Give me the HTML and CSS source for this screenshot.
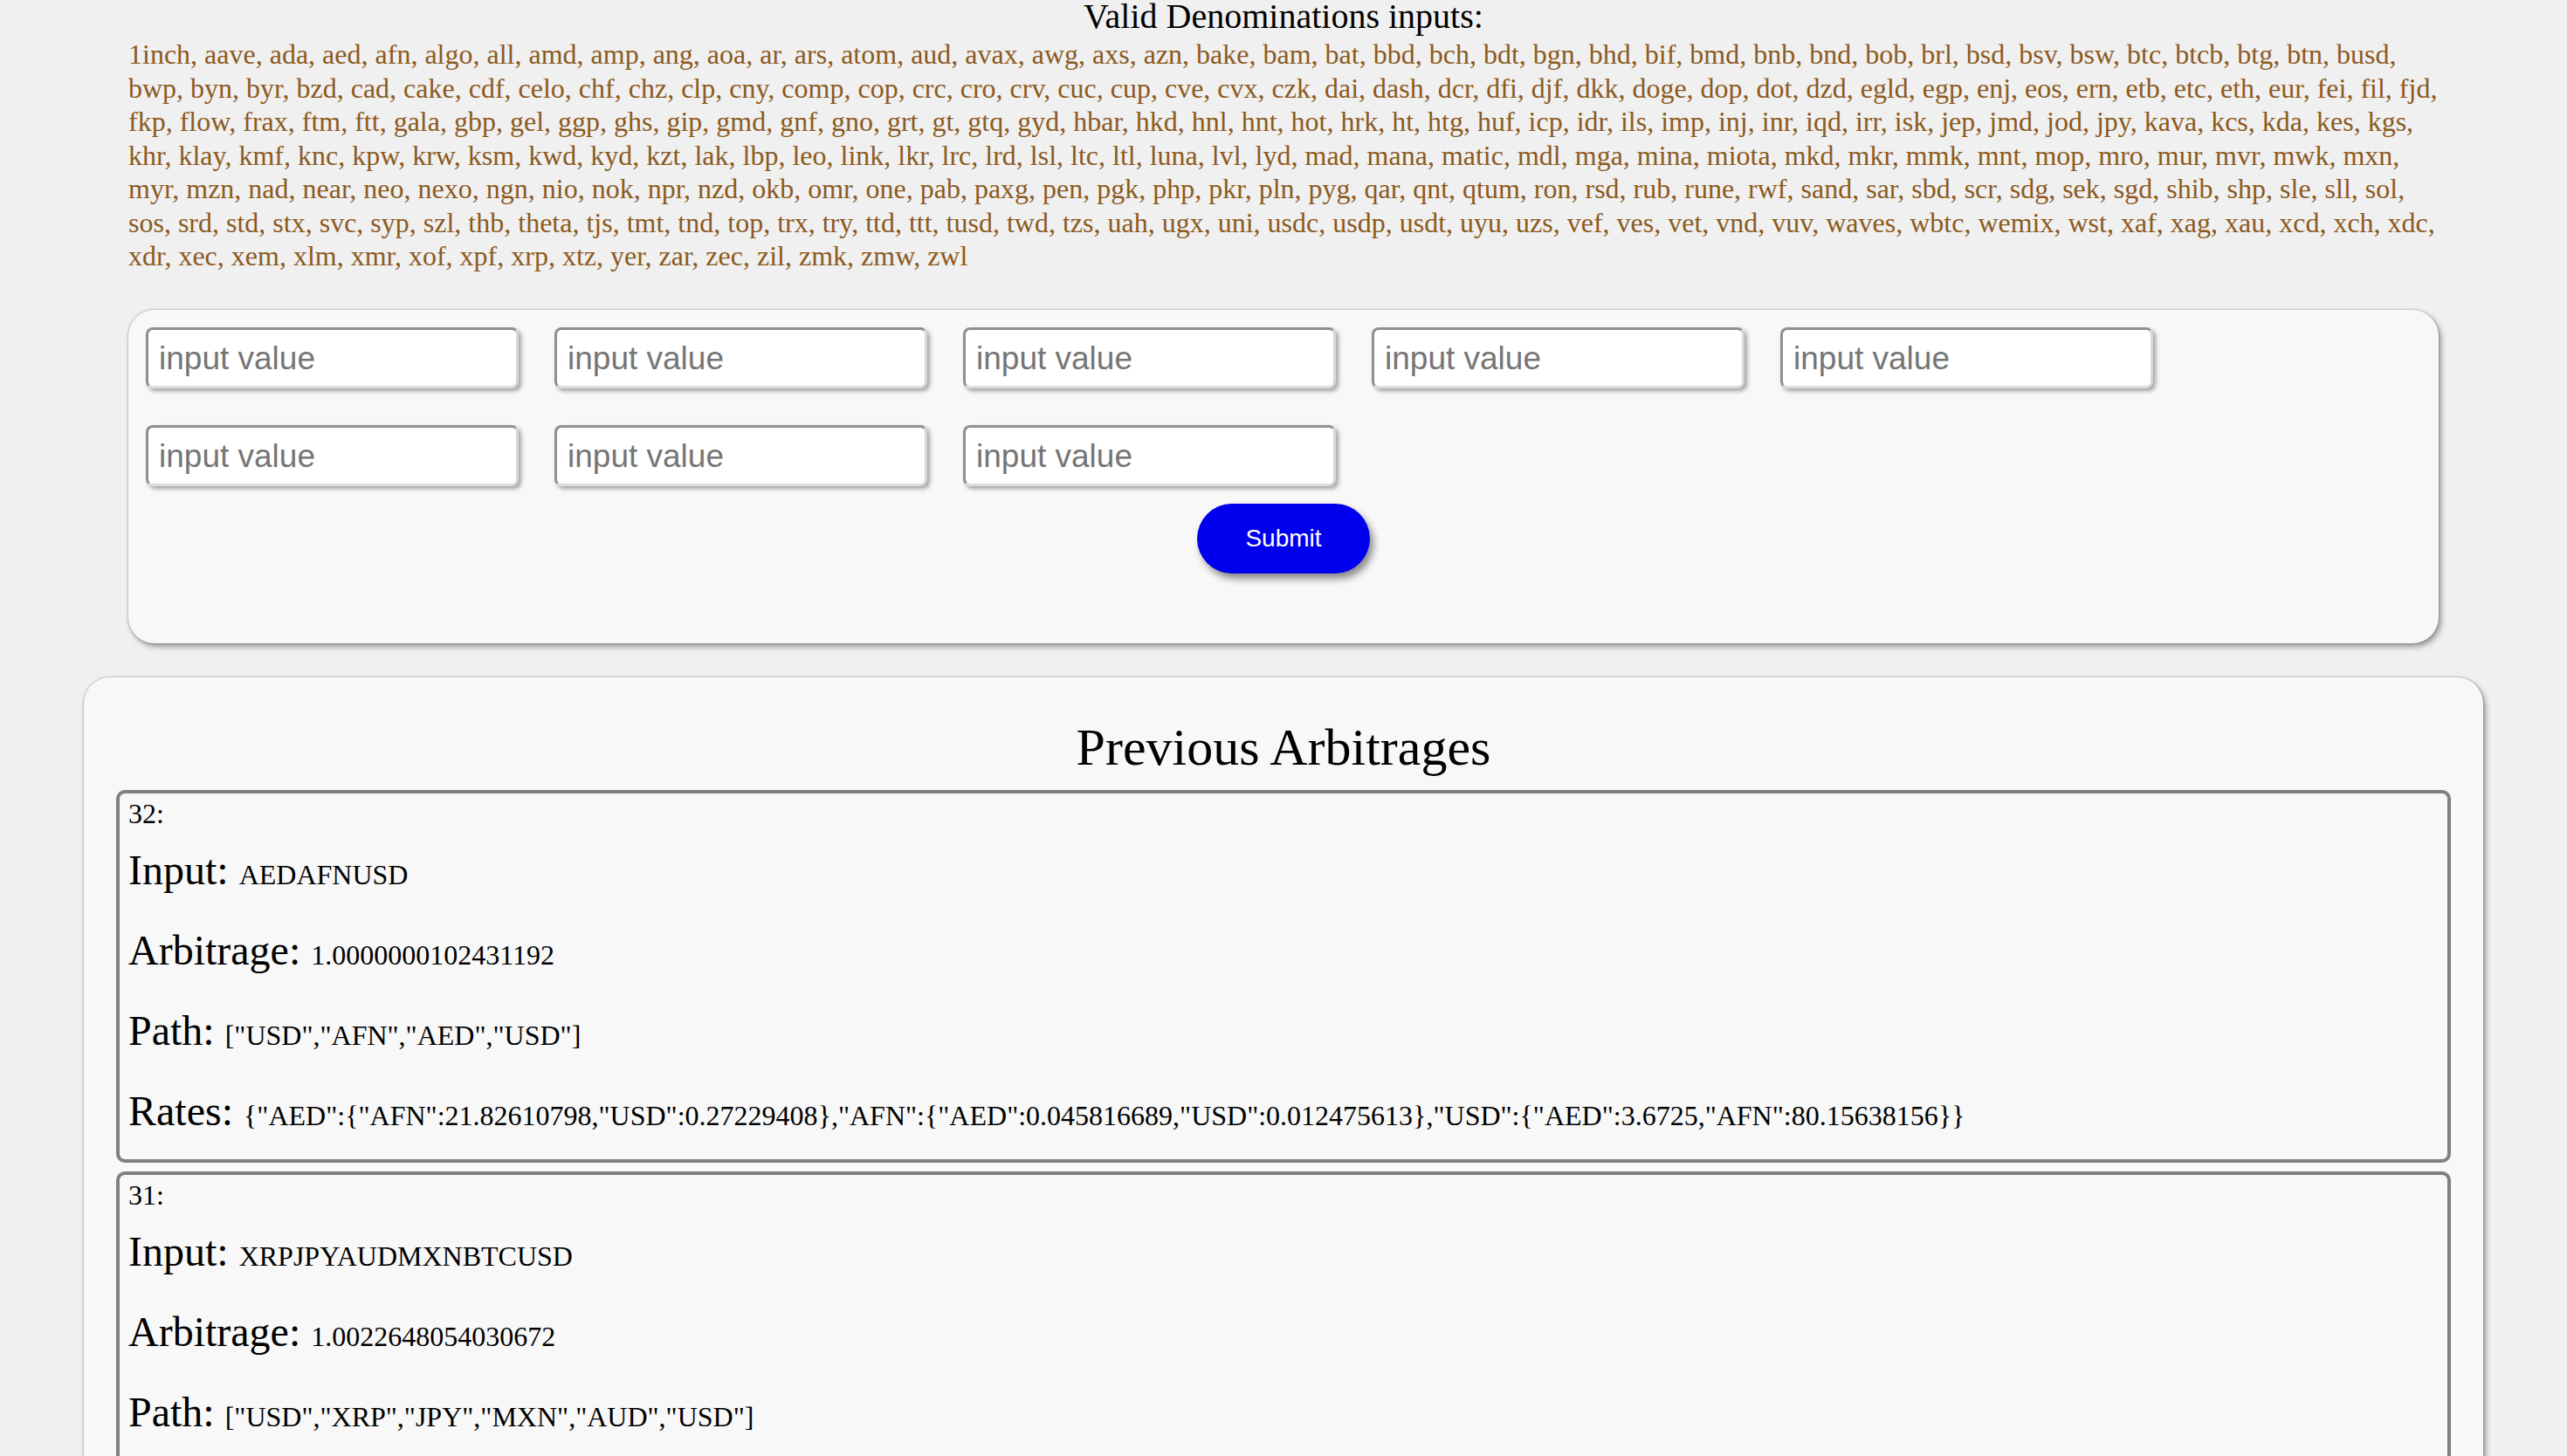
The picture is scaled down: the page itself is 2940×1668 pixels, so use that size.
FILE: index.html
```html
<!DOCTYPE html>
<html lang="en">
<head>
<meta charset="utf-8">
<title>Arbitrage Finder</title>
<link rel="stylesheet" href="styles.css">
</head>
<body>
<header class="denoms">
  <h3 class="denoms-title">Valid Denominations inputs:</h3>
  <p class="denoms-list">1inch, aave, ada, aed, afn, algo, all, amd, amp, ang, aoa, ar, ars, atom, aud, avax, awg, axs, azn, bake, bam, bat, bbd, bch, bdt, bgn, bhd, bif, bmd, bnb, bnd, bob, brl, bsd, bsv, bsw, btc, btcb, btg, btn, busd, bwp, byn, byr, bzd, cad, cake, cdf, celo, chf, chz, clp, cny, comp, cop, crc, cro, crv, cuc, cup, cve, cvx, czk, dai, dash, dcr, dfi, djf, dkk, doge, dop, dot, dzd, egld, egp, enj, eos, ern, etb, etc, eth, eur, fei, fil, fjd, fkp, flow, frax, ftm, ftt, gala, gbp, gel, ggp, ghs, gip, gmd, gnf, gno, grt, gt, gtq, gyd, hbar, hkd, hnl, hnt, hot, hrk, ht, htg, huf, icp, idr, ils, imp, inj, inr, iqd, irr, isk, jep, jmd, jod, jpy, kava, kcs, kda, kes, kgs, khr, klay, kmf, knc, kpw, krw, ksm, kwd, kyd, kzt, lak, lbp, leo, link, lkr, lrc, lrd, lsl, ltc, ltl, luna, lvl, lyd, mad, mana, matic, mdl, mga, mina, miota, mkd, mkr, mmk, mnt, mop, mro, mur, mvr, mwk, mxn, myr, mzn, nad, near, neo, nexo, ngn, nio, nok, npr, nzd, okb, omr, one, pab, paxg, pen, pgk, php, pkr, pln, pyg, qar, qnt, qtum, ron, rsd, rub, rune, rwf, sand, sar, sbd, scr, sdg, sek, sgd, shib, shp, sle, sll, sol, sos, srd, std, stx, svc, syp, szl, thb, theta, tjs, tmt, tnd, top, trx, try, ttd, ttt, tusd, twd, tzs, uah, ugx, uni, usdc, usdp, usdt, uyu, uzs, vef, ves, vet, vnd, vuv, waves, wbtc, wemix, wst, xaf, xag, xau, xcd, xch, xdc, xdr, xec, xem, xlm, xmr, xof, xpf, xrp, xtz, yer, zar, zec, zil, zmk, zmw, zwl</p>
</header>

<form class="input-form">
  <div class="input-grid">
    <input class="value-input" type="text" placeholder="input value">
    <input class="value-input" type="text" placeholder="input value">
    <input class="value-input" type="text" placeholder="input value">
    <input class="value-input" type="text" placeholder="input value">
    <input class="value-input" type="text" placeholder="input value">
    <input class="value-input" type="text" placeholder="input value">
    <input class="value-input" type="text" placeholder="input value">
    <input class="value-input" type="text" placeholder="input value">
  </div>
  <button class="submit-btn" type="button">Submit</button>
</form>

<section class="history">
  <h2 class="history-title">Previous Arbitrages</h2>

  <article class="arb-card">
    <div class="arb-id">32:</div>
    <div class="arb-row"><span class="arb-label">Input:</span> <span class="arb-value">AEDAFNUSD</span></div>
    <div class="arb-row"><span class="arb-label">Arbitrage:</span> <span class="arb-value">1.0000000102431192</span></div>
    <div class="arb-row"><span class="arb-label">Path:</span> <span class="arb-value">["USD","AFN","AED","USD"]</span></div>
    <div class="arb-row"><span class="arb-label">Rates:</span> <span class="arb-value">{"AED":{"AFN":21.82610798,"USD":0.27229408},"AFN":{"AED":0.045816689,"USD":0.012475613},"USD":{"AED":3.6725,"AFN":80.15638156}}</span></div>
  </article>

  <article class="arb-card">
    <div class="arb-id">31:</div>
    <div class="arb-row"><span class="arb-label">Input:</span> <span class="arb-value">XRPJPYAUDMXNBTCUSD</span></div>
    <div class="arb-row"><span class="arb-label">Arbitrage:</span> <span class="arb-value">1.0022648054030672</span></div>
    <div class="arb-row"><span class="arb-label">Path:</span> <span class="arb-value">["USD","XRP","JPY","MXN","AUD","USD"]</span></div>
  </article>
</section>
</body>
</html>
```

FILE: styles.css
```css
html {
  overflow: hidden;
}

body {
  margin: 0;
  background: #f0f0f0;
  color: #000;
  font-family: "Liberation Serif", "Times New Roman", serif;
}

.denoms-title {
  margin: 0;
  padding-top: 1px;
  font-size: 40px;
  font-weight: normal;
  line-height: 36px;
  text-align: center;
}

.denoms-list {
  width: 90%;
  margin: 6px auto 0;
  font-size: 32px;
  line-height: 38.5px;
  color: #8c5a1e;
}

.input-form {
  width: 90%;
  box-sizing: border-box;
  margin: 42px auto 0;
  padding: 20px 20px 80px;
  background: #f8f8f8;
  border-radius: 30px;
  box-shadow: 0 0 3px rgba(0, 0, 0, 0.35), 3px 4px 6px rgba(0, 0, 0, 0.35);
  display: flex;
  flex-direction: column;
  align-items: center;
  gap: 20px;
}

.input-grid {
  align-self: stretch;
  display: flex;
  flex-wrap: wrap;
  column-gap: 41px;
  row-gap: 42px;
}

.value-input {
  width: 427px;
  height: 70px;
  box-sizing: border-box;
  margin: 0;
  padding: 2px 12px 0;
  border: 3px solid;
  border-color: #8f8f8f #d8d8d8 #dcdcdc #8f8f8f;
  border-radius: 8px;
  background: #fff;
  box-shadow: 3px 3px 5px rgba(0, 0, 0, 0.35);
  font-family: "Liberation Sans", Arial, sans-serif;
  font-size: 37px;
  color: #333;
  outline: none;
}

.value-input::placeholder {
  color: #757575;
}

.submit-btn {
  width: 198px;
  height: 80px;
  border: none;
  border-radius: 40px;
  background: #0000ee;
  color: #fff;
  font-family: "Liberation Sans", Arial, sans-serif;
  font-size: 28px;
  box-shadow: 4px 6px 8px rgba(0, 0, 0, 0.45);
  cursor: pointer;
}

.history {
  margin: 39px 96px 0;
  padding: 46px 37px 20px;
  background: #f8f8f8;
  border-radius: 30px;
  box-shadow: 0 0 3px rgba(0, 0, 0, 0.35), 3px 4px 6px rgba(0, 0, 0, 0.35);
}

.history-title {
  margin: 0 0 14px;
  font-size: 60px;
  font-weight: normal;
  line-height: 69px;
  text-align: center;
}

.arb-card {
  border: 4px solid #808080;
  border-radius: 10px;
  padding: 4px 10px 27px;
  margin-bottom: 10px;
}

.arb-id {
  font-size: 32px;
  line-height: 38px;
}

.arb-row {
  font-size: 48px;
  line-height: 56px;
  margin-top: 36px;
}

.arb-id + .arb-row {
  margin-top: 18px;
}

.arb-value {
  font-size: 32px;
  line-height: 1;
}
```
